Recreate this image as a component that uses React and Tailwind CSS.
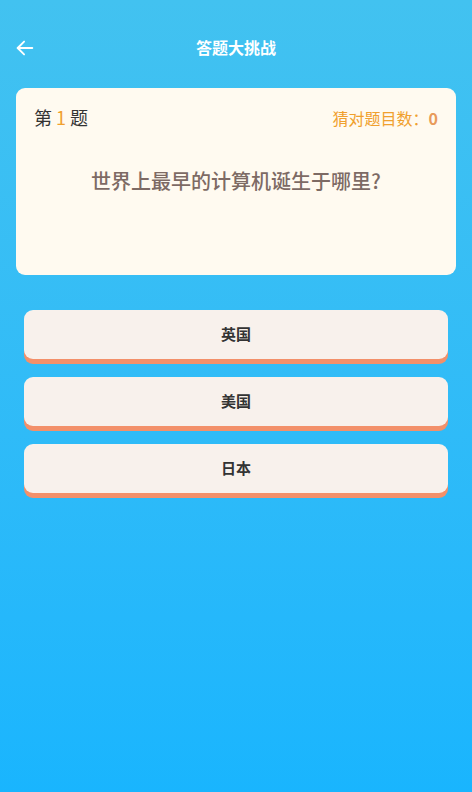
import React from 'react';

const options = ['英国', '美国', '日本'];

const App = () => {
    return (
        <div
            className="w-[472px] h-[792px] flex flex-col bg-gradient-to-b from-[#42c2f0] to-[#19b5fe]"
            style={{ fontFamily: '"Noto Sans CJK SC", "Noto Sans", sans-serif' }}
        >
            {/* Header */}
            <div className="relative h-[96px] flex items-center justify-center pb-[2px]">
                <button className="absolute left-[14px] top-[37px] text-white">
                    <svg width="22" height="22" viewBox="0 0 24 24" fill="none" stroke="currentColor" strokeWidth="2" strokeLinecap="round" strokeLinejoin="round">
                        <path d="M20 12H4" />
                        <path d="M11 5l-7 7 7 7" />
                    </svg>
                </button>
                <h1 className="text-white text-[16px] font-bold">答题大挑战</h1>
            </div>

            {/* Question card */}
            <div className="mx-[16px] h-[187px] -mt-[8px] rounded-[9px] bg-[#fffaf0] flex flex-col px-[18px]">
                <div className="flex items-center justify-between pt-[16px]">
                    <div className="text-[18px] text-[#333]">
                        第 <span className="text-[#f0a02e]">1</span> 题
                    </div>
                    <div className="text-[16px] text-[#f0a02e]">
                        猜对题目数：<span className="text-[#e89a5a] font-bold">0</span>
                    </div>
                </div>
                <div className="mt-[35px] text-center text-[20px] font-medium text-[#7d6a64]">世界上最早的计算机诞生于哪里?</div>
            </div>

            {/* Options */}
            <div className="mt-[35px] mx-[24px] flex flex-col gap-[18px]">
                {options.map(o => (
                    <button
                        key={o}
                        className="h-[49px] rounded-[9px] bg-[#f8f1ec] shadow-[0_5px_0_#f3906a] text-[15px] font-bold text-[#333]"
                    >
                        {o}
                    </button>
                ))}
            </div>
        </div>
    );
};

export default App;
